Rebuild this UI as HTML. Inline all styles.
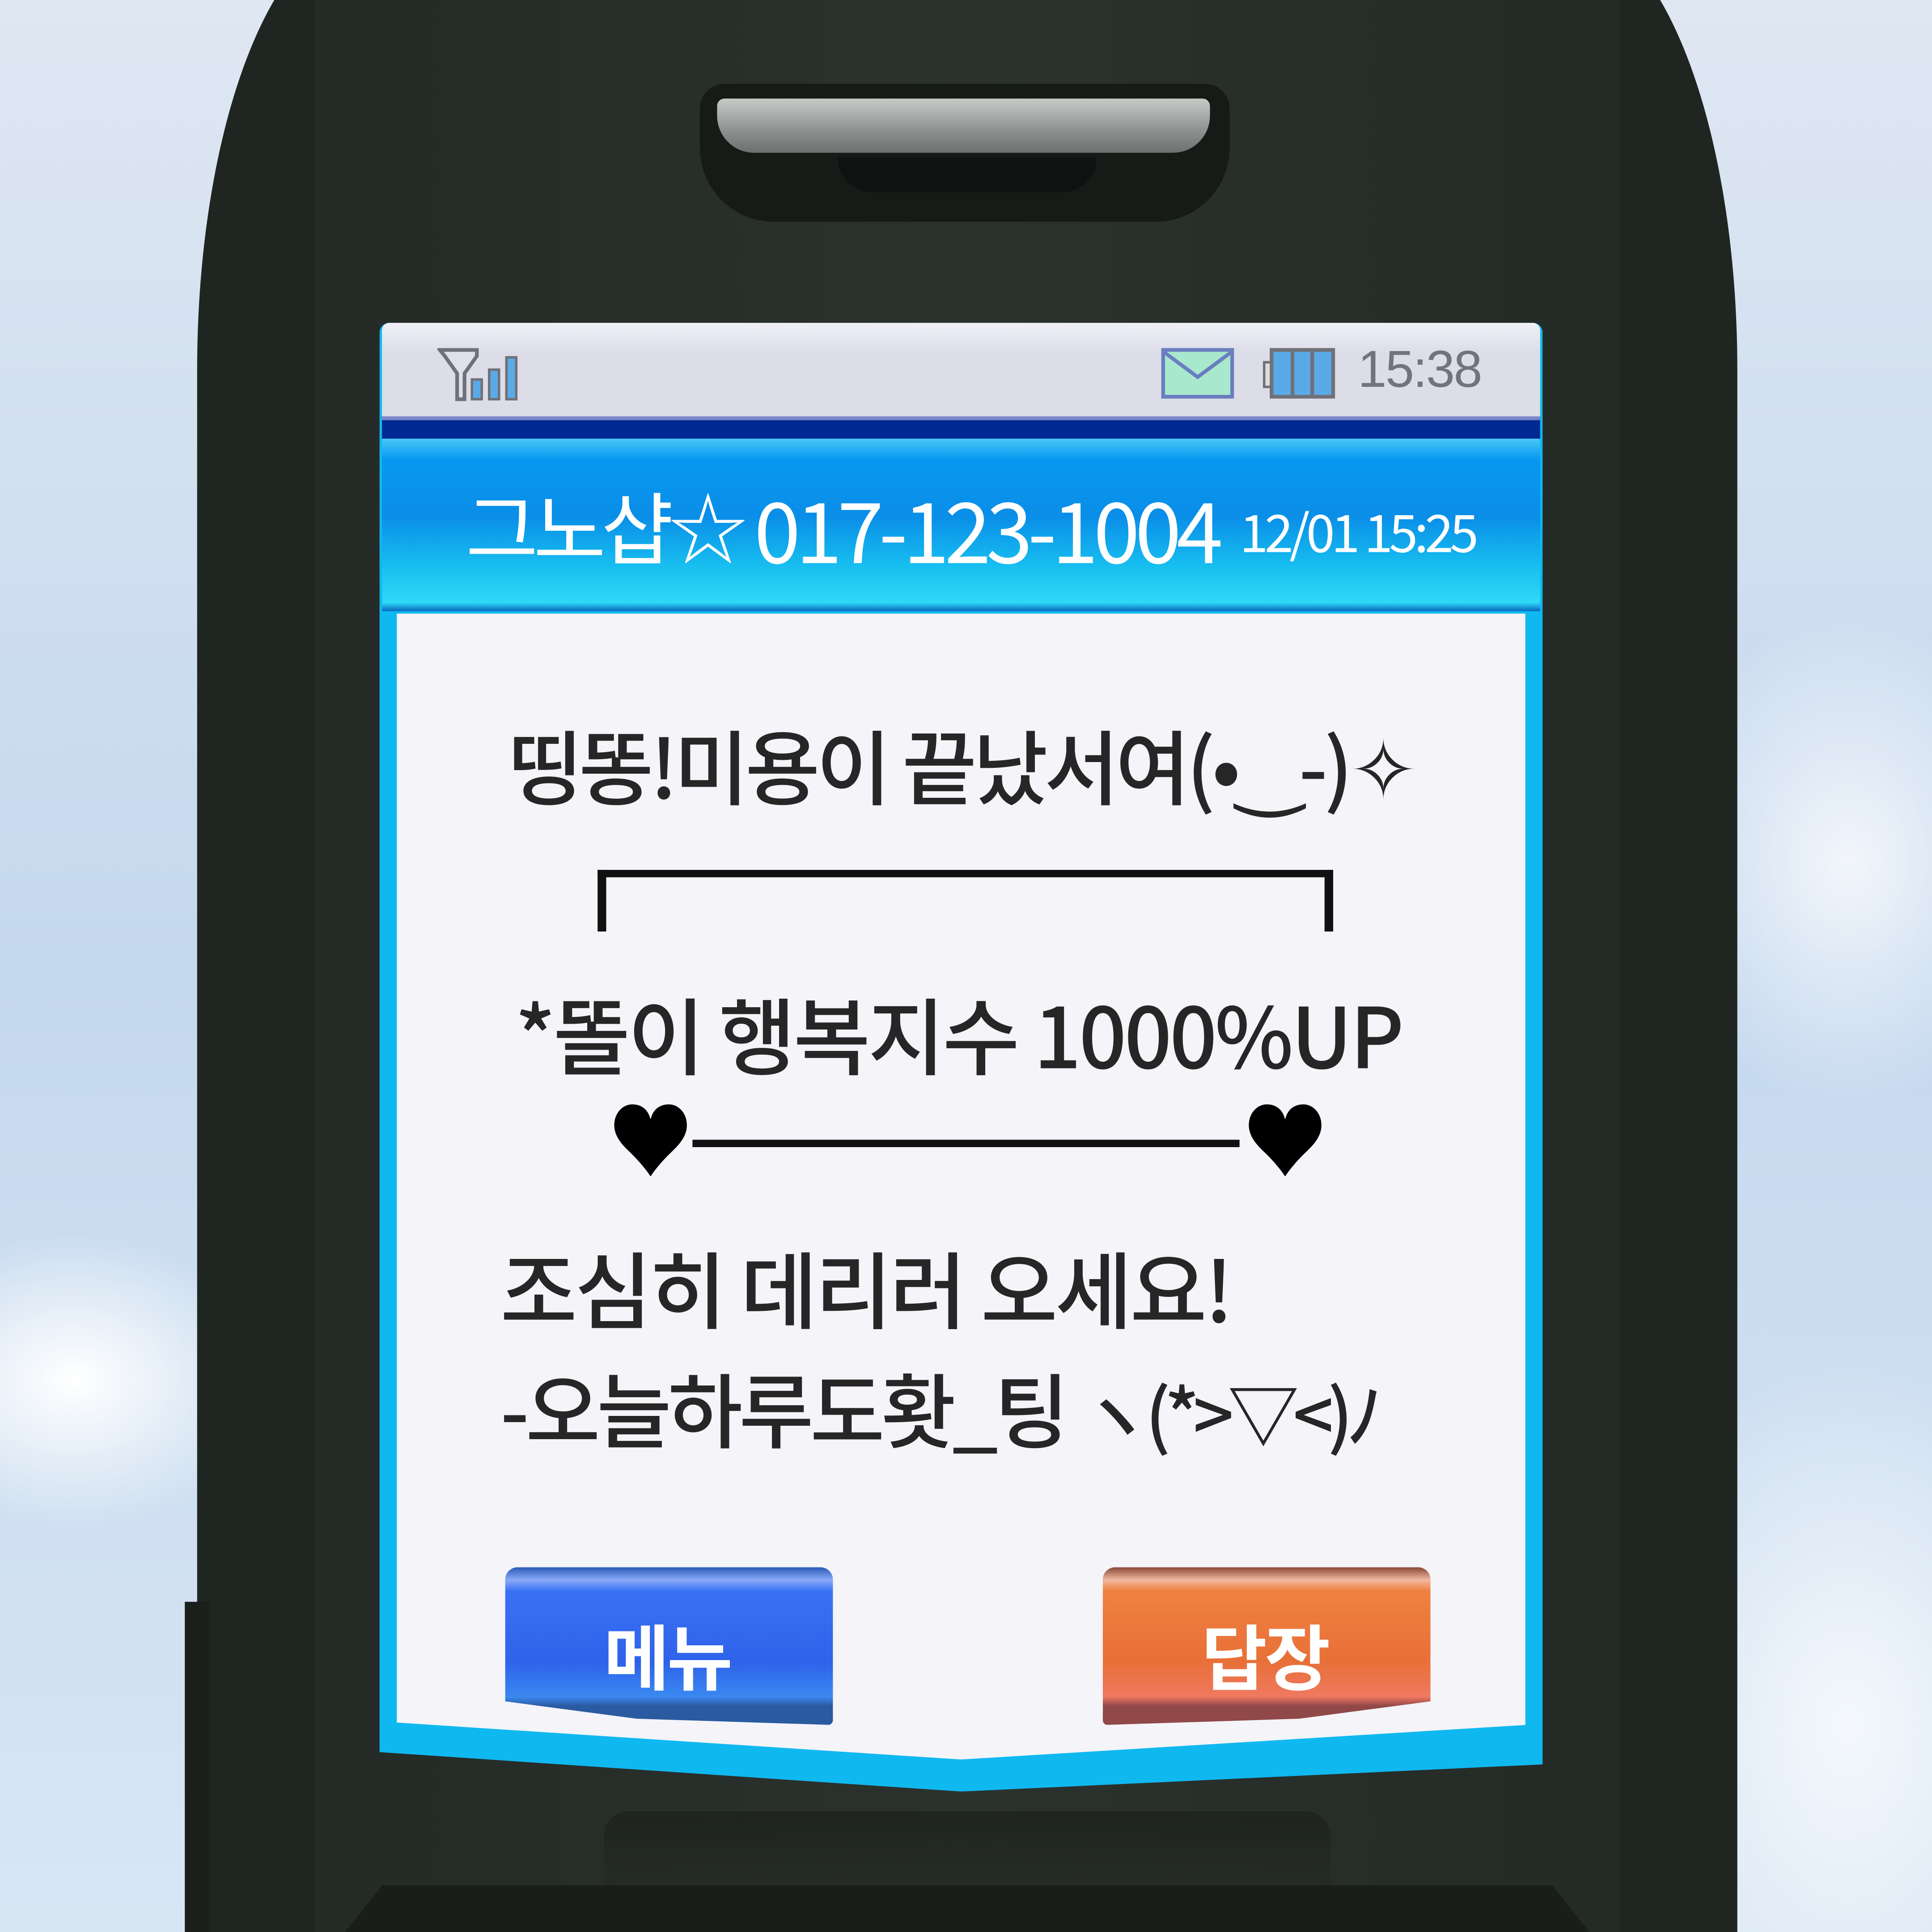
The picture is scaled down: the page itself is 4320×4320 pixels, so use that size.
<!DOCTYPE html>
<html><head><meta charset="utf-8"><style>
html,body{margin:0;padding:0;width:4320px;height:4320px;overflow:hidden;background:#cfe0f0;position:relative}
#s{position:absolute;left:0;top:0;width:1568px;height:1568px;transform:scale(2.755102);transform-origin:0 0;overflow:hidden;
background:radial-gradient(ellipse 160px 120px at 60px 1120px,#fff 0%,rgba(255,255,255,0) 100%),radial-gradient(ellipse 200px 300px at 1500px 1400px,#f4f8fc 0%,rgba(255,255,255,0) 100%),radial-gradient(ellipse 160px 200px at 1500px 700px,#f2f6fb 0%,rgba(255,255,255,0) 100%),linear-gradient(180deg,#dfe7f2 0%,#c4d8ee 50%,#d8e6f4 100%);
font-family:"Liberation Sans","Noto Sans CJK KR","NanumGothic",sans-serif}
.a{position:absolute}
.t{position:absolute;white-space:nowrap;color:#262626;font-weight:500;font-family:"Noto Sans CJK KR","NanumGothic",sans-serif}
</style></head><body><div id="s">
<!-- phone body -->
<div class="a" style="left:160px;top:-60px;width:1250px;height:1700px;background:#1f2521;border-radius:140px 140px 0 0/360px 360px 0 0"></div>
<div class="a" style="left:150px;top:1300px;width:20px;height:268px;background:#1a1f1c"></div>
<div class="a" style="left:255px;top:0;width:1060px;height:1568px;background:linear-gradient(90deg,#242a26,#2b322d 50%,#242a26)"></div>
<!-- speaker -->
<div class="a" style="left:568px;top:68px;width:430px;height:112px;background:#171b18;border-radius:20px 20px 60px 60px"></div>
<div class="a" style="left:582px;top:80px;width:400px;height:44px;background:linear-gradient(180deg,#c8cac8,#8d908e 60%,#6e706f);border-radius:6px 6px 30px 30px"></div>
<div class="a" style="left:680px;top:128px;width:210px;height:28px;background:#0f1210;border-radius:0 0 30px 30px"></div>
<!-- screen -->
<div class="a" style="left:308px;top:262px;width:944px;height:1192px;background:#10b8f0;border-radius:8px 8px 0 0;clip-path:polygon(0 0,100% 0,100% 1170px,50% 100%,0 1160px)"></div>
<div class="a" style="left:310px;top:262px;width:940px;height:80px;background:linear-gradient(180deg,#f0f0f8,#dcdde8 30%,#dcdde6);border-radius:6px 6px 0 0"></div>
<div class="a" style="left:310px;top:338px;width:940px;height:18px;background:#002a92;border-top:3px solid #7a88c8"></div>
<div class="a" style="left:310px;top:356px;width:940px;height:140px;background:linear-gradient(180deg,#48c8f8 0%,#0898f0 12%,#0a8ee8 45%,#18c0f0 75%,#30d8f8 95%,#0868c0 100%)"></div>
<div class="a" style="left:322px;top:498px;width:916px;height:930px;background:#f4f4f9;clip-path:polygon(0 0,100% 0,100% 902px,50% 100%,0 900px)"></div>
<!-- status icons -->
<svg class="a" style="left:355px;top:282px" width="70" height="44" viewBox="0 0 70 44">
<path d="M2 2h30v5l-10 14v21h-6V21L6 7z" fill="#e0e0ea" stroke="#707078" stroke-width="3"/>
<rect x="28" y="26" width="8" height="16" fill="#5aaae8" stroke="#707078" stroke-width="2"/>
<rect x="42" y="18" width="8" height="24" fill="#5aaae8" stroke="#707078" stroke-width="2"/>
<rect x="56" y="8" width="8" height="34" fill="#5aaae8" stroke="#707078" stroke-width="2"/></svg>
<svg class="a" style="left:942px;top:282px" width="60" height="42" viewBox="0 0 60 42">
<rect x="2" y="2" width="56" height="38" fill="#a8e8cc" stroke="#6a7ec0" stroke-width="3"/>
<path d="M3 4l27 20 27-20" fill="none" stroke="#6a7ec0" stroke-width="3"/></svg>
<svg class="a" style="left:1024px;top:282px" width="60" height="42" viewBox="0 0 60 42">
<rect x="2" y="12" width="6" height="20" fill="#ddd" stroke="#707078" stroke-width="2"/>
<rect x="8" y="2" width="50" height="38" fill="#5aaae8" stroke="#707078" stroke-width="3"/>
<path d="M25 2v38M41 2v38" stroke="#707078" stroke-width="3"/></svg>
<div class="a" style="left:1102px;top:276px;font-size:42px;color:#73737b;font-family:'Liberation Sans',sans-serif;letter-spacing:-1px">15:38</div>
<!-- header -->
<div class="t" style="left:378px;top:380px;font-size:64px;color:#fff;letter-spacing:-4px;font-weight:normal">그노샵☆</div>
<div class="t" style="left:612px;top:378px;font-size:68px;color:#fff;letter-spacing:-4px;font-weight:normal">017-123-1004</div>
<div class="t" style="left:1006px;top:400px;font-size:42px;color:#fff;letter-spacing:-3px;font-weight:normal">12/01 15:25</div>
<!-- body text -->
<div class="t" style="left:412px;top:572px;font-size:66px;letter-spacing:-3px">띵똥!미용이 끝났서여(•‿-)✧</div>
<div class="a" style="left:485px;top:706px;width:597px;height:6px;background:#111"></div>
<div class="a" style="left:485px;top:706px;width:7px;height:50px;background:#111"></div>
<div class="a" style="left:1075px;top:706px;width:7px;height:50px;background:#111"></div>
<div class="t" style="left:418px;top:788px;font-size:68px;letter-spacing:-2px">*똘이 행복지수 1000%UP</div>
<div class="t" style="left:493px;top:872px;font-size:70px;color:#000">♥</div>
<div class="a" style="left:562px;top:925px;width:444px;height:6px;background:#111"></div>
<div class="t" style="left:1008px;top:872px;font-size:70px;color:#000">♥</div>
<div class="t" style="left:406px;top:994px;font-size:68px;letter-spacing:-2px">조심히 데리러 오세요!</div>
<div class="t" style="left:406px;top:1094px;font-size:66px;letter-spacing:-3px">-오늘하루도홧_팅 <span style="font-size:58px;letter-spacing:-5px">ヽ(*&gt;▽&lt;)ﾉ</span></div>
<!-- buttons -->
<div class="a" style="left:410px;top:1272px;width:266px;height:128px;background:linear-gradient(180deg,#2a5ab8 0,#8aaaf8 8%,#3a72f4 15%,#2e62ea 60%,#3a88f0 82%,#2a5aa0 88%,#2a5aa0 100%);border-radius:10px 10px 4px 14px;clip-path:polygon(0 0,100% 0,100% 100%,40% 96%,0 85%)"></div>
<div class="t" style="left:490px;top:1300px;font-size:58px;color:#fff;letter-spacing:-2px;font-weight:bold">메뉴</div>
<div class="a" style="left:895px;top:1272px;width:266px;height:128px;background:linear-gradient(180deg,#8a4838 0,#f0b8a0 8%,#f08040 15%,#e87038 60%,#f07860 82%,#904848 88%,#904848 100%);border-radius:10px 10px 14px 4px;clip-path:polygon(0 0,100% 0,100% 85%,60% 96%,0 100%)"></div>
<div class="t" style="left:975px;top:1300px;font-size:58px;color:#fff;letter-spacing:-2px;font-weight:bold">답장</div>
<!-- lower phone detail -->
<div class="a" style="left:490px;top:1470px;width:590px;height:98px;background:linear-gradient(180deg,#1c211e,#2a302c);border-radius:20px 20px 0 0;opacity:.8"></div>
<div class="a" style="left:280px;top:1530px;width:1010px;height:38px;background:#1a1e1b;clip-path:polygon(0 100%,3% 0,97% 0,100% 100%)"></div>
</div></body></html>
